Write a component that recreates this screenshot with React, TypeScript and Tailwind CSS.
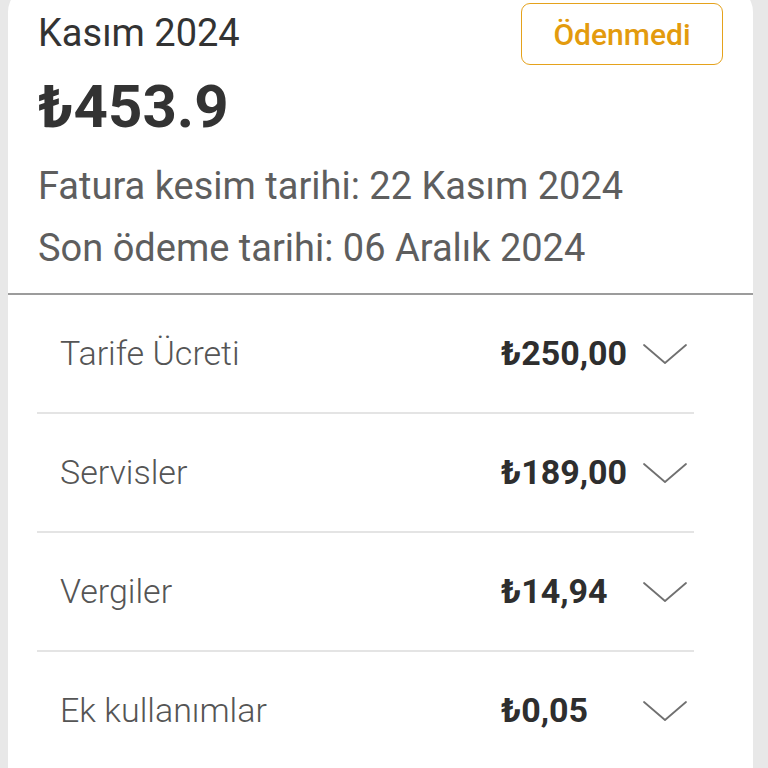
const items = [
  { label: 'Tarife Ücreti', amount: '₺250,00' },
  { label: 'Servisler', amount: '₺189,00' },
  { label: 'Vergiler', amount: '₺14,94' },
  { label: 'Ek kullanımlar', amount: '₺0,05' },
];

function Chevron() {
  return (
    <svg width="46" height="24" viewBox="0 0 46 24" fill="none" className="shrink-0">
      <polyline points="2,3 23,21 44,3" stroke="#707070" strokeWidth="1.8" strokeLinecap="round" strokeLinejoin="round" />
    </svg>
  );
}

export default function App() {
  return (
    <div className="h-[768px] w-[768px] overflow-hidden bg-[#e8e8e8] font-['Roboto',sans-serif]">
      <div className="ml-[8px] mt-[-14px] w-[745px] rounded-t-[26px] bg-white pb-[40px]">
        {/* header */}
        <div className="px-[30px] pt-[17px] pb-[14px]">
          <div className="flex items-start justify-between">
            <div className="pt-[10px]">
              <div className="text-[38px] leading-[40px] text-[#333]">Kasım 2024</div>
              <div className="mt-[22px] text-[60px] font-bold leading-[64px] text-[#333]">₺453.9</div>
            </div>
            <div className="flex h-[62px] w-[202px] items-center justify-center rounded-[9px] border-[1.5px] border-[#e5a21c] text-[30px] font-medium text-[#e39b0e]">
              Ödenmedi
            </div>
          </div>
          <div className="mt-[16px] text-[38px] leading-[62px] text-[#5e5e5e]">
            <div>Fatura kesim tarihi: 22 Kasım 2024</div>
            <div>Son ödeme tarihi: 06 Aralık 2024</div>
          </div>
        </div>
        <div className="h-[2px] bg-[#9c9c9c]" />

        {/* bill items */}
        <div>
          {items.map((item) => (
            <div
              key={item.label}
              className="mx-[29px] flex h-[119px] w-[657px] items-center border-b-2 border-[#e4e4e4] pl-[23px] pr-[6px]"
            >
              <div className="flex-1 text-[34px] font-light text-[#555]">{item.label}</div>
              <div className="w-[141px] text-[34px] font-bold text-[#2e2e2e]">{item.amount}</div>
              <Chevron />
            </div>
          ))}
        </div>
      </div>
    </div>
  );
}
